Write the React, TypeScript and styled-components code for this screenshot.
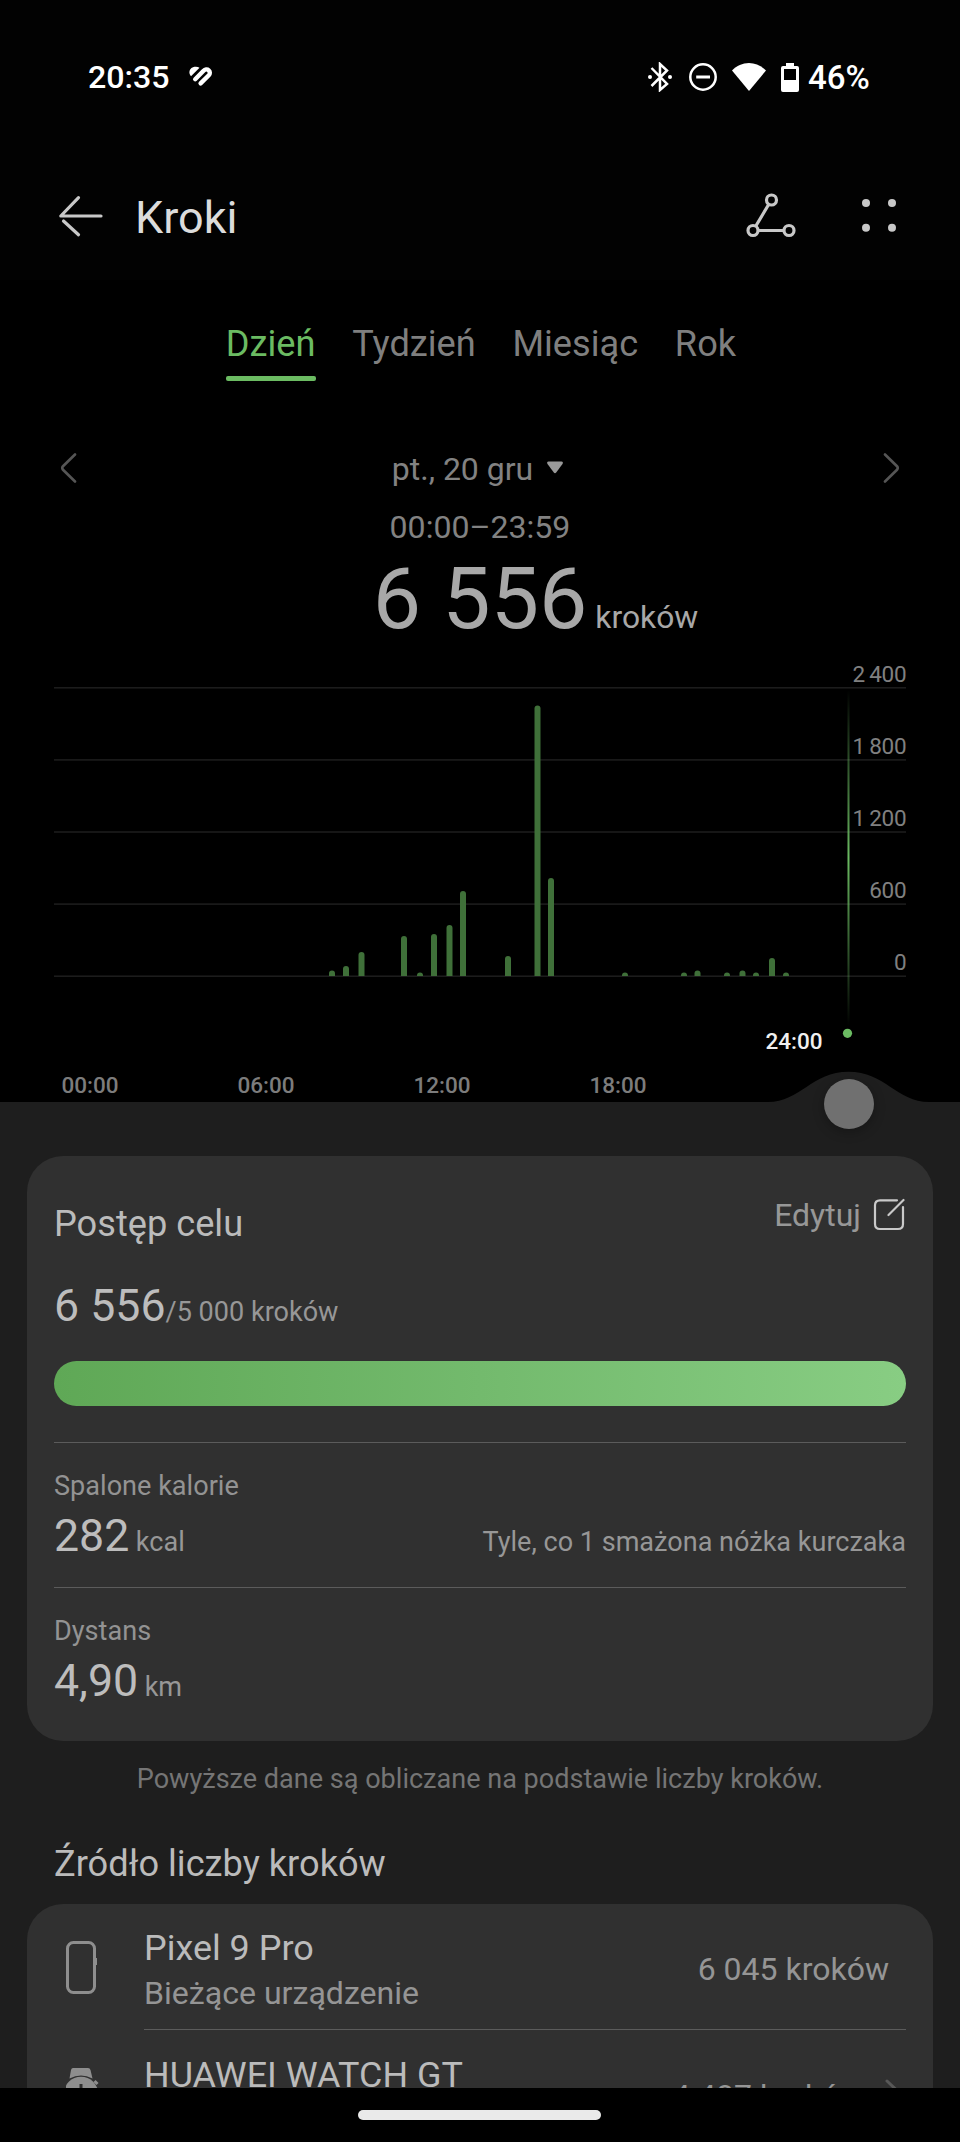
import React from "react";
import styled, { createGlobalStyle } from "styled-components";

const GlobalStyle = createGlobalStyle`
  *, *::before, *::after { box-sizing: border-box; }
  body { margin: 0; background: #000; }
  button { border: 0; padding: 0; background: none; font: inherit; color: inherit; }
  svg { display: block; flex: none; }
`;

const Screen = styled.div`
  width: 960px;
  height: 2142px;
  display: flex;
  flex-direction: column;
  overflow: hidden;
  background: #000;
  color: #b9b9b9;
  font-family: Roboto, "Liberation Sans", sans-serif;
`;

const StatusBar = styled.div`
  height: 154px;
  flex: none;
  display: flex;
  align-items: center;
  padding: 0 89px 0 88px;
  background: #020202;
  color: #fff;
  font-size: 32.2px;
  font-weight: 500;
`;

const Clock = styled.span`
  width: 101px;
`;

const StatusIcons = styled.div`
  margin-left: auto;
  display: flex;
  align-items: center;
  gap: 15px;
`;

const BatteryText = styled.span`
  width: 63px;
  margin-left: -6px;
  font-size: 33px;
`;

const Header = styled.header`
  height: 126px;
  flex: none;
  display: flex;
  align-items: center;
  padding: 0 64px 0 58px;
  background: #020202;
  color: #c8c8c8;
`;

const Title = styled.h1`
  margin: 1px auto 0 32px;
  font-size: 45px;
  font-weight: 400;
  line-height: 54px;
  color: #dcdcdc;
`;

const HeaderActions = styled.div`
  display: flex;
  align-items: center;
  gap: 66px;
`;

const Tabs = styled.nav`
  display: flex;
  justify-content: center;
  gap: 36.7px;
  padding: 40px 0 0 2px;
  height: 101px;
  flex: none;
`;

const Tab = styled.button<{ $active?: boolean }>`
  font-size: 36.2px;
  line-height: 48px;
  color: ${(p) => (p.$active ? "#6bbb62" : "#7f7f7f")};
  display: flex;
  flex-direction: column;

  &::after {
    content: "";
    display: ${(p) => (p.$active ? "block" : "none")};
    flex: none;
    width: 100%;
    height: 5px;
    margin-top: 8px;
    border-radius: 2px;
    background: #6bbb62;
  }
`;

const DateRow = styled.div`
  height: 40px;
  margin: 68px 60px 0;
  flex: none;
  display: flex;
  align-items: center;
  justify-content: space-between;
  color: #555;
`;

const DateLabel = styled.div`
  display: flex;
  align-items: center;
  gap: 13px;
  padding-right: 4px;
  font-size: 32px;
  line-height: 40px;
  color: #828282;
`;

const TimeRange = styled.div`
  flex: none;
  margin-top: 18px;
  text-align: center;
  font-size: 32.1px;
  line-height: 40px;
  color: #828282;
`;

const Total = styled.div`
  flex: none;
  height: 104px;
  display: grid;
  grid-template-columns: 1fr auto 1fr;
  align-items: baseline;
  column-gap: 8px;
  line-height: 104px;
  color: #a8a8a8;
`;

const TotalValue = styled.span`
  grid-column: 2;
  font-size: 86px;
`;

const TotalUnit = styled.span`
  font-size: 31.8px;
`;

const ChartArea = styled.div`
  position: relative;
  flex: none;
  height: 451px;
`;

const AxisText = styled.text`
  font-size: 22.5px;
  fill: #808080;
`;

const TimeText = styled.text<{ $current?: boolean }>`
  font-size: 22.5px;
  font-weight: 500;
  fill: ${(p) => (p.$current ? "#f0f0f0" : "#7c7c7c")};
`;

const SliderKnob = styled.button`
  position: absolute;
  left: 823.5px;
  top: 428px;
  width: 50px;
  height: 50px;
  border-radius: 50%;
  background: #707070;
  box-shadow: 0 3px 12px rgba(0, 0, 0, 0.28);
`;

const Panel = styled.main`
  flex: 1;
  min-height: 0;
  overflow: hidden;
  padding: 54px 27px 0;
  background: #1e1e1e;
`;

const Card = styled.section`
  background: #303030;
  border-radius: 36px;
  padding: 0 27px;
`;

const CardHeader = styled.div`
  display: flex;
  justify-content: space-between;
  align-items: flex-start;
  padding-top: 44px;
  height: 92px;
`;

const Heading = styled.h2`
  margin: 0;
  font-size: 36.2px;
  font-weight: 400;
  line-height: 48px;
  color: #bbb;
`;

const SectionHeading = styled(Heading)`
  margin: 43px 27px 16px;
`;

const EditButton = styled.button`
  display: flex;
  align-items: center;
  gap: 11px;
  margin: -2px 1px 0 0;
  font-size: 32px;
  line-height: 35px;
  color: #979797;
`;

const Figure = styled.div<{ $gap?: number }>`
  display: flex;
  align-items: baseline;
  gap: ${(p) => p.$gap ?? 0}px;
  height: 54px;
  line-height: 54px;
`;

const GoalFigure = styled(Figure)`
  margin-top: 31px;
`;

const Value = styled.span`
  font-size: 44.7px;
  color: #bdbdbd;
`;

const Small = styled.span`
  font-size: 27.05px;
  color: #979797;
`;

const Comparison = styled(Small)`
  margin-left: auto;
`;

const ProgressTrack = styled.div`
  height: 45px;
  margin: 28px 0 36px;
  border-radius: 23px;
  background: #454545;
  overflow: hidden;
`;

const ProgressFill = styled.div`
  height: 100%;
  background: linear-gradient(90deg, #5fa856, #73ba6d 50%, #88cd83);
`;

const Metric = styled.div`
  border-top: 1px solid #5b5b5b;
  padding: 25px 0 24px;

  &:last-child {
    padding-bottom: 33px;
  }
`;

const MetricLabel = styled.div`
  font-size: 27.1px;
  line-height: 36px;
  margin-bottom: 5px;
  color: #939393;
`;

const Note = styled.p`
  margin: 20px 0 0;
  text-align: center;
  font-size: 27.05px;
  line-height: 36px;
  color: #757575;
`;

const SourceRow = styled.div`
  display: grid;
  grid-template-columns: 90px 1fr;
`;

const SourceIcon = styled.div`
  padding: 37px 0 0 12px;
  color: #8e8e8e;
`;

const SourceBody = styled.div<{ $divided?: boolean }>`
  display: flex;
  justify-content: space-between;
  align-items: center;
  height: ${(p) => (p.$divided ? 126 : 127)}px;
  padding: 20px ${(p) => (p.$divided ? 17 : 2)}px 15px 0;
  border-bottom: 1px solid ${(p) => (p.$divided ? "#5b5b5b" : "transparent")};
`;

const SourceNames = styled.div`
  height: 90px;
`;

const SourceName = styled.div`
  font-size: 35.95px;
  line-height: 48px;
  color: #bbb;
`;

const SourceDetail = styled.div`
  font-size: 32.1px;
  line-height: 43px;
  color: #959595;
`;

const SourceValue = styled.div`
  display: flex;
  align-items: center;
  gap: 21.5px;
  font-size: 32px;
  line-height: 42px;
  color: #959595;
`;

const RowChevron = styled.svg`
  color: #585858;
`;

const GestureBar = styled.footer`
  height: 54px;
  flex: none;
  display: flex;
  justify-content: center;
  padding: 22px 2px 0 0;
  background: #000;
`;

const GestureHandle = styled.div`
  width: 243px;
  height: 10px;
  border-radius: 5px;
  background: #eaeaea;
`;

const FitIcon = () => (
  <svg width="24" height="22" viewBox="0 0 24 22" fill="none" stroke="#fff">
    <path d="M10.500 1.700L2 10.300C-.9 7 .3 2.600 4 1.300C6.200 .5 8.800 .7 10.500 1.700Z" fill="#fff" stroke="none" />
    <path
      d="M6.200 13.200L14.300 5C16 3.300 18.200 2.900 19.700 4.300C21.200 5.700 21.200 7.700 19.800 9.200L11.600 17.400"
      strokeWidth="4.400"
      strokeLinecap="round"
    />
  </svg>
);

const BluetoothIcon = () => (
  <svg width="24" height="30" viewBox="0 0 24 30" fill="none" stroke="#fff" strokeWidth="2.500">
    <path d="M3.500 6L19 22L12 28V2L19 8.500L3.500 24" />
    <circle cx="2" cy="15" r="2" fill="#fff" stroke="none" />
    <circle cx="22" cy="15" r="2" fill="#fff" stroke="none" />
  </svg>
);

const DoNotDisturbIcon = () => (
  <svg width="30" height="28" viewBox="-2 0 30 28" fill="none" stroke="#fff">
    <circle cx="14" cy="14" r="12.700" strokeWidth="2.500" />
    <path d="M7.200 14H21" strokeWidth="3" />
  </svg>
);

const WifiIcon = () => (
  <svg width="34" height="28" viewBox="0 0 34 28" fill="#fff">
    <path d="M0 7.500C4.700 2.800 10.500 0 17 0S29.300 2.800 34 7.500L17 28Z" />
  </svg>
);

const BatteryIcon = () => (
  <svg width="18" height="29" viewBox="0 0 18 29" fill="#fff">
    <path
      fillRule="evenodd"
      d="M5 0H13V3H16Q18 3 18 5V27Q18 29 16 29H2Q0 29 0 27V5Q0 3 2 3H5ZM3 6V17H15V6Z"
    />
  </svg>
);

const BackIcon = () => (
  <svg width="45" height="44" viewBox="0 0 45 44" fill="none" stroke="currentColor" strokeWidth="3.200" strokeLinecap="round">
    <path d="M43 21H2.800L20.500 2.600" strokeLinejoin="round" />
    <path d="M5.500 26L20.500 39.700" />
  </svg>
);

const RouteIcon = () => (
  <svg width="50" height="50" viewBox="0 0 50 50" fill="none" stroke="currentColor" strokeWidth="3.200">
    <circle cx="25.500" cy="8" r="5" />
    <circle cx="7" cy="38.500" r="5" />
    <circle cx="43" cy="38.500" r="5" />
    <path d="M22.800 12.300L9.700 34.200M12 38.500H38" />
  </svg>
);

const GridDotsIcon = () => (
  <svg width="34" height="40" viewBox="0 0 34 40" fill="currentColor">
    <circle cx="4" cy="6" r="4" />
    <circle cx="30" cy="6" r="4" />
    <circle cx="4" cy="30.700" r="4" />
    <circle cx="30" cy="30.700" r="4" />
  </svg>
);

const ChevronIcon = ({ direction }: { direction: "left" | "right" }) => (
  <svg width="17" height="32" viewBox="0 0 17 32" fill="none" stroke="currentColor" strokeWidth="2.600" strokeLinecap="round">
    {direction === "left" ? (
      <path d="M15 1.500L3 13.200Q1.500 15 3 16.800L15 28.500" />
    ) : (
      <path d="M2 1.500L14 13.200Q15.500 15 14 16.800L2 28.500" />
    )}
  </svg>
);

const CaretIcon = () => (
  <svg width="18" height="18" viewBox="0 0 18 18" fill="#999">
    <path d="M2.500 1.500H15.500Q17.700 2 16.500 4L10.200 12.500Q9 14 7.800 12.500L1.500 4Q.3 2 2.500 1.500Z" />
  </svg>
);

const EditIcon = () => (
  <svg width="33" height="35" viewBox="0 0 33 35" fill="none" stroke="#c9c9c9" strokeWidth="2.200" strokeLinecap="round">
    <path d="M25 2.300H8Q3 2.300 3 7.300V26Q3 31 8 31H26Q31 31 31 26V9" />
    <path d="M16.500 17L31.500 2" />
  </svg>
);

const PhoneIcon = () => (
  <svg width="31" height="53" viewBox="0 0 31 53" fill="none" stroke="currentColor" strokeWidth="3">
    <rect x="1.500" y="1.500" width="27" height="50" rx="6" />
    <path d="M30 17V24" strokeWidth="2" />
  </svg>
);

const WatchIcon = () => (
  <svg width="33" height="54" viewBox="0 0 33 54" fill="currentColor">
    <path d="M7 1H22Q24 1 24.500 3L26.500 11.500Q15 5.500 3.500 11.500L5 3Q5.500 1 7 1Z" />
    <circle cx="15" cy="27" r="17.300" />
    <path d="M15 17V27H22" fill="none" stroke="#303030" strokeWidth="3" />
    <path d="M28.500 14L31.500 17" stroke="currentColor" strokeWidth="3" />
  </svg>
);

const BASELINE = 325;
const gridLabels = ["2\u2009400", "1\u2009800", "1\u2009200", "600", "0"];

// Left edge and height of each half-hour bar, in pixels.
const bars: [number, number][] = [
  [329, 5.5], [343, 10], [358.5, 24], [401, 40], [417, 3.5], [431, 42], [446.5, 51],
  [460, 85], [505, 20], [534.5, 270.5], [548, 98], [622, 3.5], [681, 3.5],
  [694.5, 5.5], [724, 3.5], [739.5, 5.5], [753, 3.5], [769, 18], [783, 3.5],
];

const StepsChart = () => (
  <svg width="960" height="451" viewBox="0 0 960 451">
    <defs>
      <linearGradient id="cursor" x1="0" y1="0" x2="0" y2="1">
        <stop offset="0" stopColor="#6bbb62" stopOpacity="0" />
        <stop offset="0.5" stopColor="#6bbb62" />
        <stop offset="1" stopColor="#6bbb62" stopOpacity="0" />
      </linearGradient>
    </defs>
    {gridLabels.map((label, i) => (
      <g key={label}>
        <rect x="54" y={36 + i * 72.1} width="852" height="1.600" fill="#1c1c1c" />
        <AxisText x="906.300" y={31 + i * 72} textAnchor="end" letterSpacing="-0.3">
          {label}
        </AxisText>
      </g>
    ))}
    {bars.map(([x, h]) => {
      const top = BASELINE - h;
      return (
        <path
          key={x}
          d={`M${x} ${BASELINE}V${top + 3}a3 3 0 0 1 6 0V${BASELINE}Z`}
          fill="#3f7039"
        />
      );
    })}
    <rect x="847.500" y="39" width="2" height="336" fill="url(#cursor)" />
    <circle cx="847.500" cy="382.300" r="4.600" fill="#6bbb62" />
    {["00:00", "06:00", "12:00", "18:00"].map((t, i) => (
      <TimeText key={t} x={90 + i * 176} y="442" textAnchor="middle">
        {t}
      </TimeText>
    ))}
    <TimeText $current x="794" y="398" textAnchor="middle">
      24:00
    </TimeText>
    <path
      d="M768 451C800 451 812 420.700 848.500 420.700S897 451 929 451Z"
      fill="#1e1e1e"
    />
  </svg>
);

export default function App() {
  return (
    <Screen>
      <GlobalStyle />
      <StatusBar>
        <Clock>20:35</Clock>
        <FitIcon />
        <StatusIcons>
          <BluetoothIcon />
          <DoNotDisturbIcon />
          <WifiIcon />
          <BatteryIcon />
          <BatteryText>46%</BatteryText>
        </StatusIcons>
      </StatusBar>

      <Header>
        <BackIcon />
        <Title>Kroki</Title>
        <HeaderActions>
          <RouteIcon />
          <GridDotsIcon />
        </HeaderActions>
      </Header>

      <Tabs>
        <Tab $active>Dzień</Tab>
        <Tab>Tydzień</Tab>
        <Tab>Miesiąc</Tab>
        <Tab>Rok</Tab>
      </Tabs>

      <DateRow>
        <ChevronIcon direction="left" />
        <DateLabel>
          pt., 20 gru
          <CaretIcon />
        </DateLabel>
        <ChevronIcon direction="right" />
      </DateRow>
      <TimeRange>00:00–23:59</TimeRange>
      <Total>
        <TotalValue>6 556</TotalValue>
        <TotalUnit>kroków</TotalUnit>
      </Total>

      <ChartArea>
        <StepsChart />
        <SliderKnob aria-label="24:00" />
      </ChartArea>

      <Panel>
        <Card>
          <CardHeader>
            <Heading>Postęp celu</Heading>
            <EditButton>
              Edytuj
              <EditIcon />
            </EditButton>
          </CardHeader>
          <GoalFigure>
            <Value>6 556</Value>
            <Small>/5 000 kroków</Small>
          </GoalFigure>
          <ProgressTrack>
            <ProgressFill />
          </ProgressTrack>
          <Metric>
            <MetricLabel>Spalone kalorie</MetricLabel>
            <Figure $gap={6.5}>
              <Value>282</Value>
              <Small>kcal</Small>
              <Comparison>Tyle, co 1 smażona nóżka kurczaka</Comparison>
            </Figure>
          </Metric>
          <Metric>
            <MetricLabel>Dystans</MetricLabel>
            <Figure $gap={6.5}>
              <Value>4,90</Value>
              <Small>km</Small>
            </Figure>
          </Metric>
        </Card>

        <Note>Powyższe dane są obliczane na podstawie liczby kroków.</Note>

        <SectionHeading>Źródło liczby kroków</SectionHeading>
        <Card>
          <SourceRow>
            <SourceIcon>
              <PhoneIcon />
            </SourceIcon>
            <SourceBody $divided>
              <SourceNames>
                <SourceName>Pixel 9 Pro</SourceName>
                <SourceDetail>Bieżące urządzenie</SourceDetail>
              </SourceNames>
              <SourceValue>6 045 kroków</SourceValue>
            </SourceBody>
          </SourceRow>
          <SourceRow>
            <SourceIcon>
              <WatchIcon />
            </SourceIcon>
            <SourceBody>
              <SourceNames>
                <SourceName>HUAWEI WATCH GT</SourceName>
              </SourceNames>
              <SourceValue>
                4 487 kroków
                <RowChevron
                  width="19"
                  height="34"
                  viewBox="0 0 19 34"
                  fill="none"
                  stroke="currentColor"
                  strokeWidth="3"
                  strokeLinecap="round"
                >
                  <path d="M2 2L16 15.300Q17.500 17 16 18.700L2 32" />
                </RowChevron>
              </SourceValue>
            </SourceBody>
          </SourceRow>
        </Card>
      </Panel>

      <GestureBar>
        <GestureHandle />
      </GestureBar>
    </Screen>
  );
}
